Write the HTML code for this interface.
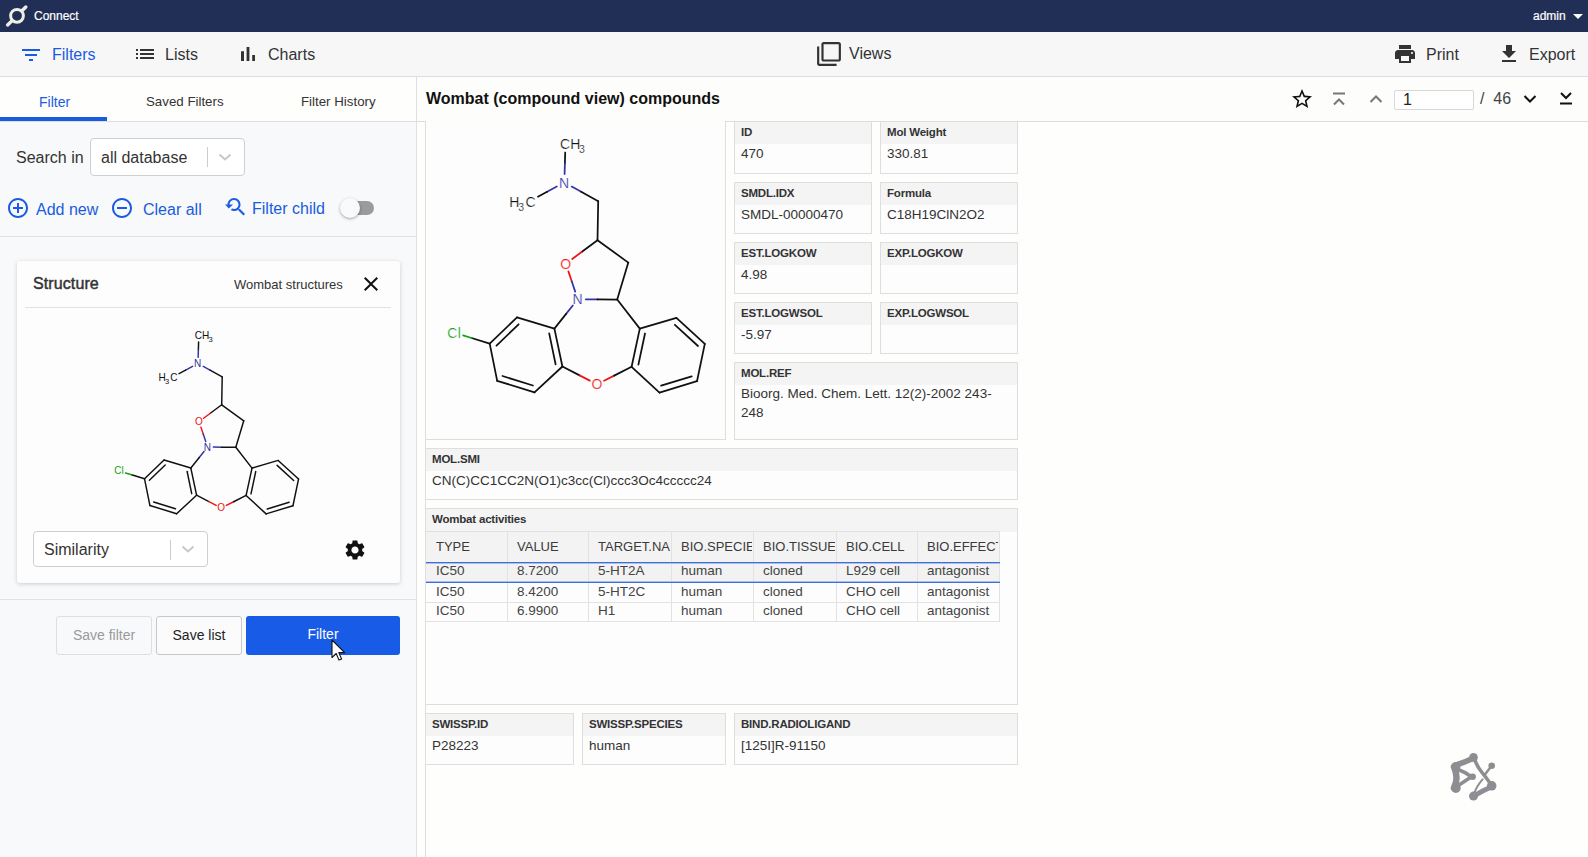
<!DOCTYPE html>
<html><head><meta charset="utf-8">
<style>
*{box-sizing:border-box;margin:0;padding:0}
html,body{width:1588px;height:857px;overflow:hidden;background:#fefefd;font-family:"Liberation Sans",sans-serif;color:#333}
.abs{position:absolute}
svg{display:block}
#hdr{left:0;top:0;width:1588px;height:32px;background:#212f56}
#tb{left:0;top:32px;width:1588px;height:45px;background:#f7f7f8;border-bottom:1px solid #dedede}
#lp{left:0;top:77px;width:417px;height:780px;background:#f8f9fa;border-right:1px solid #e0e0e2}
#tabs{left:0;top:0;width:416px;height:45px;background:#fefefd;border-bottom:1px solid #dfdfdf}
#main{left:417px;top:77px;width:1171px;height:780px;background:#fefefd}
.t{position:absolute;white-space:nowrap;line-height:1}
.box{position:absolute;border:1px solid #dedede;background:#fdfdfd}
.box .lh{position:absolute;left:0;top:0;right:0;height:22px;background:#f4f4f5}
.box .lb{position:absolute;left:6px;top:5px;font-size:11.5px;letter-spacing:-0.2px;font-weight:bold;color:#333;white-space:nowrap;line-height:1}
.box .vl{position:absolute;left:6px;top:25px;font-size:13.5px;color:#333;white-space:nowrap;line-height:1}
</style></head><body>
<!-- header -->
<div id="hdr" class="abs">
  <svg class="abs" style="left:0;top:0" width="32" height="32" viewBox="0 0 32 32">
    <circle cx="17" cy="15.8" r="6.4" fill="none" stroke="#f0ece6" stroke-width="3"/>
    <path d="M22 10.8L25.8 7" stroke="#f0ece6" stroke-width="3.4" stroke-linecap="round"/>
    <path d="M12 20.8L7.6 24.9" stroke="#f0ece6" stroke-width="3.4" stroke-linecap="round"/>
  </svg>
  <div class="t" style="left:34px;top:10px;font-size:12px;color:#fff;-webkit-text-stroke:0.2px #fff">Connect</div>
  <div class="t" style="left:1533px;top:10px;font-size:12px;color:#fff;-webkit-text-stroke:0.2px #fff">admin</div>
  <svg class="abs" style="left:1573px;top:14px" width="10" height="5" viewBox="0 0 10 5"><path d="M0 0h10L5 5z" fill="#fff"/></svg>
</div>
<!-- toolbar -->
<div id="tb" class="abs">
  <svg class="abs" style="left:19px;top:11px" width="24" height="24" viewBox="0 0 24 24"><path fill="#1a5ce0" d="M10 18h4v-2h-4v2zM3 6v2h18V6H3zm3 7h12v-2H6v2z"/></svg>
  <div class="t" style="left:52px;top:15px;font-size:16px;color:#1a5ce0">Filters</div>
  <svg class="abs" style="left:133px;top:10px" width="24" height="24" viewBox="0 0 24 24"><path fill="#333" d="M3 13h2v-2H3v2zm0 4h2v-2H3v2zm0-8h2V7H3v2zm4 4h14v-2H7v2zm0 4h14v-2H7v2zM7 7v2h14V7H7z"/></svg>
  <div class="t" style="left:165px;top:15px;font-size:16px;color:#333">Lists</div>
  <svg class="abs" style="left:236px;top:10px" width="24" height="24" viewBox="0 0 24 24"><path fill="#333" d="M5 9.2h3V19H5zM10.6 5h2.8v14h-2.8zm5.6 8H19v6h-2.8z"/></svg>
  <div class="t" style="left:268px;top:15px;font-size:16px;color:#333">Charts</div>
  <svg class="abs" style="left:816px;top:9px" width="26" height="26" viewBox="0 0 24 24"><path fill="#333" d="M3 5H1v16c0 1.1.9 2 2 2h16v-2H3V5zm18-4H7c-1.1 0-2 .9-2 2v14c0 1.1.9 2 2 2h14c1.1 0 2-.9 2-2V3c0-1.1-.9-2-2-2zm0 16H7V3h14v14z"/></svg>
  <div class="t" style="left:849px;top:14px;font-size:16px;color:#333">Views</div>
  <svg class="abs" style="left:1393px;top:10px" width="24" height="24" viewBox="0 0 24 24"><path fill="#333" d="M19 8H5c-1.66 0-3 1.34-3 3v6h4v4h12v-4h4v-6c0-1.66-1.34-3-3-3zm-3 11H8v-5h8v5zm3-7c-.55 0-1-.45-1-1s.45-1 1-1 1 .45 1 1-.45 1-1 1zm-1-9H6v4h12V3z"/></svg>
  <div class="t" style="left:1426px;top:15px;font-size:16px;color:#333">Print</div>
  <svg class="abs" style="left:1497px;top:10px" width="24" height="24" viewBox="0 0 24 24"><path fill="#333" d="M19 9h-4V3H9v6H5l7 7 7-7zM5 18v2h14v-2H5z"/></svg>
  <div class="t" style="left:1529px;top:15px;font-size:16px;color:#333">Export</div>
</div>
<!-- left panel -->
<div id="lp" class="abs">
  <div id="tabs" class="abs">
    <div class="t" style="left:39px;top:18px;font-size:14px;color:#1a5ce0">Filter</div>
    <div class="abs" style="left:0;top:40px;width:107px;height:4px;background:#1a5ce0"></div>
    <div class="t" style="left:146px;top:18px;font-size:13.3px;color:#333">Saved Filters</div>
    <div class="t" style="left:301px;top:18px;font-size:13.3px;color:#333">Filter History</div>
  </div>
  <div class="t" style="left:16px;top:73px;font-size:16px;color:#333">Search in</div>
  <div class="abs" style="left:90px;top:61px;width:155px;height:38px;border:1px solid #cfcfcf;border-radius:4px;background:#fff">
    <div class="t" style="left:10px;top:11px;font-size:16px;color:#333">all database</div>
    <div class="abs" style="left:116px;top:8px;width:1px;height:20px;background:#ccc"></div>
    <svg class="abs" style="left:127px;top:13px" width="14" height="10" viewBox="0 0 14 10"><path d="M1.5 2.5L7 7.5l5.5-5" fill="none" stroke="#c8c8c8" stroke-width="2"/></svg>
  </div>
  <svg class="abs" style="left:6px;top:119px" width="24" height="24" viewBox="0 0 24 24"><path fill="#1a5ce0" d="M13 7h-2v4H7v2h4v4h2v-4h4v-2h-4V7zm-1-5C6.48 2 2 6.48 2 12s4.48 10 10 10 10-4.48 10-10S17.52 2 12 2zm0 18c-4.41 0-8-3.59-8-8s3.59-8 8-8 8 3.59 8 8-3.59 8-8 8z"/></svg>
  <div class="t" style="left:36px;top:125px;font-size:16px;color:#1a5ce0">Add new</div>
  <svg class="abs" style="left:110px;top:119px" width="24" height="24" viewBox="0 0 24 24"><path fill="#1a5ce0" d="M7 11v2h10v-2H7zm5-9C6.48 2 2 6.48 2 12s4.48 10 10 10 10-4.48 10-10S17.52 2 12 2zm0 18c-4.41 0-8-3.59-8-8s3.59-8 8-8 8 3.59 8 8-3.59 8-8 8z"/></svg>
  <div class="t" style="left:143px;top:125px;font-size:16px;color:#1a5ce0">Clear all</div>
  <svg class="abs" style="left:223px;top:118px" width="24" height="24" viewBox="0 0 24 24"><path fill="#1a5ce0" d="M17.01 14h-.8l-.27-.27c.98-1.14 1.57-2.61 1.57-4.23 0-3.59-2.91-6.5-6.5-6.5s-6.5 3-6.5 6.5H2l3.84 4 4.16-4H6.51C6.51 7 8.530 5 11.01 5s4.5 2.01 4.5 4.5c0 2.480-2.02 4.5-4.5 4.5-.65 0-1.26-.14-1.82-.38L7.71 15.1c.97.57 2.09.9 3.3.9 1.61 0 3.08-.59 4.22-1.57l.27.27v.79l5.01 4.99L22 19l-4.99-5z"/></svg>
  <div class="t" style="left:252px;top:124px;font-size:16px;color:#1a5ce0">Filter child</div>
  <div class="abs" style="left:341px;top:124px;width:33px;height:14px;border-radius:7px;background:#9b9b9b"></div>
  <div class="abs" style="left:340px;top:121px;width:20px;height:20px;border-radius:10px;background:#fafafa;box-shadow:0 1px 3px rgba(0,0,0,.35)"></div>
  <div class="abs" style="left:0;top:159px;width:416px;height:1px;background:#e2e2e3"></div>
  <!-- card -->
  <div class="abs" style="left:17px;top:184px;width:383px;height:322px;background:#fdfdfd;border-radius:3px;box-shadow:0 1px 4px rgba(0,0,0,.18)">
    <div class="t" style="left:16px;top:15px;font-size:16px;color:#333;-webkit-text-stroke:0.45px #333;letter-spacing:0.1px">Structure</div>
    <div class="t" style="left:217px;top:17px;font-size:13px;color:#333">Wombat structures</div>
    <svg class="abs" style="left:347px;top:16px" width="14" height="14" viewBox="5 5 14 14"><path fill="#111" d="M19 6.41L17.59 5 12 10.59 6.41 5 5 6.41 10.59 12 5 17.59 6.41 19 12 13.41 17.59 19 19 17.59 13.41 12z"/></svg>
    <div class="abs" style="left:8px;top:46px;width:366px;height:1px;background:#e2e2e2"></div>
    <div class="abs" style="left:16px;top:270px;width:175px;height:36px;border:1px solid #cfcfcf;border-radius:4px;background:#fff">
      <div class="t" style="left:10px;top:10px;font-size:16px;color:#333">Similarity</div>
      <div class="abs" style="left:136px;top:8px;width:1px;height:20px;background:#ccc"></div>
      <svg class="abs" style="left:147px;top:12px" width="14" height="10" viewBox="0 0 14 10"><path d="M1.5 2.5L7 7.5l5.5-5" fill="none" stroke="#c8c8c8" stroke-width="2"/></svg>
    </div>
    <svg class="abs" style="left:326px;top:355px" width="0" height="0"></svg>
    <svg class="abs" style="left:326px;top:277px" width="24" height="24" viewBox="0 0 24 24"><path fill="#111" d="M19.14 12.94c.04-.3.06-.61.06-.94 0-.32-.02-.64-.07-.94l2.030-1.58c.18-.14.23-.41.12-.61l-1.92-3.32c-.12-.22-.37-.29-.59-.22l-2.39.96c-.5-.38-1.03-.7-1.62-.94l-.36-2.54c-.04-.24-.24-.41-.48-.41h-3.84c-.24 0-.43.17-.47.41l-.36 2.54c-.59.24-1.13.57-1.62.94l-2.39-.96c-.22-.08-.47 0-.59.22L2.74 8.87c-.12.21-.08.47.12.61l2.03 1.58c-.05.3-.09.63-.09.94s.02.64.07.94l-2.03 1.58c-.18.14-.23.41-.12.61l1.92 3.32c.12.22.37.29.59.22l2.39-.96c.5.38 1.03.7 1.62.94l.36 2.54c.05.24.24.41.48.41h3.84c.24 0 .44-.17.47-.41l.36-2.54c.59-.24 1.13-.56 1.62-.94l2.39.96c.22.08.47 0 .59-.22l1.92-3.32c.12-.22.07-.47-.12-.61l-2.01-1.58zM12 15.6c-1.98 0-3.6-1.62-3.6-3.6s1.62-3.6 3.6-3.6 3.6 1.62 3.6 3.6-1.62 3.6-3.6 3.6z"/></svg>
  </div>
  <div class="abs" style="left:0;top:522px;width:416px;height:1px;background:#e2e2e3"></div>
  <div class="abs" style="left:56px;top:539px;width:96px;height:39px;border:1px solid #dedfe0;border-radius:3px;background:#f8f9fa"><div class="t" style="left:0;width:94px;text-align:center;top:11px;font-size:14px;color:#9a9a9a">Save filter</div></div>
  <div class="abs" style="left:156px;top:539px;width:86px;height:39px;border:1px solid #c8c8c8;border-radius:3px;background:#fbfbfb"><div class="t" style="left:0;width:84px;text-align:center;top:11px;font-size:14px;color:#222">Save list</div></div>
  <div class="abs" style="left:246px;top:539px;width:154px;height:39px;border-radius:3px;background:#185be7"><div class="t" style="left:0;width:154px;text-align:center;top:11px;font-size:14px;color:#fff">Filter</div></div>
</div>
<!-- main -->
<div id="main" class="abs">
<div class="abs" style="left:0;top:0;width:1171px;height:45px;border-bottom:1px solid #dcdcdc;background:#fdfdfc"></div>
<div class="t" style="left:9px;top:14px;font-size:16px;font-weight:bold;color:#111">Wombat (compound view) compounds</div>
<svg class="abs" style="left:873px;top:10px" width="24" height="24" viewBox="0 0 24 24"><path fill="#111" d="M22 9.24l-7.19-.62L12 2 9.19 8.63 2 9.24l5.46 4.73L5.82 21 12 17.27 18.18 21l-1.63-7.03L22 9.24zM12 15.4l-3.76 2.27 1-4.28-3.32-2.88 4.38-.38L12 6.1l1.71 4.04 4.38.38-3.32 2.88 1 4.28L12 15.4z"/></svg>
<svg class="abs" style="left:914px;top:15px" width="16" height="16" viewBox="0 0 16 16"><path d="M2 1.5h12" stroke="#777" stroke-width="2"/><path d="M3 12.5l5-5 5 5" fill="none" stroke="#777" stroke-width="2"/></svg>
<svg class="abs" style="left:952px;top:15px" width="14" height="14" viewBox="0 0 14 14"><path d="M1.5 10l5.5-5.5 5.5 5.5" fill="none" stroke="#777" stroke-width="2"/></svg>
<div class="abs" style="left:977px;top:13px;width:80px;height:20px;border:1px solid #d8d8d8;border-radius:2px;background:#fff"><div class="t" style="left:8px;top:1px;font-size:16px;color:#222">1</div></div>
<div class="t" style="left:1063px;top:14px;font-size:16px;color:#444">/&nbsp;&nbsp;46</div>
<svg class="abs" style="left:1106px;top:15px" width="14" height="14" viewBox="0 0 14 14"><path d="M1.5 4l5.5 5.5 5.5-5.5" fill="none" stroke="#111" stroke-width="2"/></svg>
<svg class="abs" style="left:1141px;top:14px" width="16" height="16" viewBox="0 0 16 16"><path d="M3 2l5 5 5-5" fill="none" stroke="#111" stroke-width="2"/><path d="M2 12.5h12" stroke="#111" stroke-width="2"/></svg>
<div class="abs" style="left:8px;top:45px;width:1px;height:735px;background:#dedede"></div>
<div class="box" style="left:8px;top:44px;width:301px;height:319px;border-top:none"></div>
<div class="box" style="left:317px;top:44px;width:138px;height:53px"><div class="lh"></div><div class="lb">ID</div><div class="vl">470</div></div>
<div class="box" style="left:463px;top:44px;width:138px;height:53px"><div class="lh"></div><div class="lb">Mol Weight</div><div class="vl">330.81</div></div>
<div class="box" style="left:317px;top:105px;width:138px;height:52px"><div class="lh"></div><div class="lb">SMDL.IDX</div><div class="vl">SMDL-00000470</div></div>
<div class="box" style="left:463px;top:105px;width:138px;height:52px"><div class="lh"></div><div class="lb">Formula</div><div class="vl">C18H19ClN2O2</div></div>
<div class="box" style="left:317px;top:165px;width:138px;height:52px"><div class="lh"></div><div class="lb">EST.LOGKOW</div><div class="vl">4.98</div></div>
<div class="box" style="left:463px;top:165px;width:138px;height:52px"><div class="lh"></div><div class="lb">EXP.LOGKOW</div><div class="vl"></div></div>
<div class="box" style="left:317px;top:225px;width:138px;height:52px"><div class="lh"></div><div class="lb">EST.LOGWSOL</div><div class="vl">-5.97</div></div>
<div class="box" style="left:463px;top:225px;width:138px;height:52px"><div class="lh"></div><div class="lb">EXP.LOGWSOL</div><div class="vl"></div></div>
<div class="box" style="left:317px;top:285px;width:284px;height:78px"><div class="lh"></div><div class="lb">MOL.REF</div><div class="vl" style="line-height:19px;top:21px">Bioorg. Med. Chem. Lett. 12(2)-2002 243-<br>248</div></div>
<div class="box" style="left:8px;top:371px;width:593px;height:52px"><div class="lh"></div><div class="lb">MOL.SMI</div><div class="vl">CN(C)CC1CC2N(O1)c3cc(Cl)ccc3Oc4ccccc24</div></div>
<div class="box" style="left:8px;top:636px;width:149px;height:52px"><div class="lh"></div><div class="lb">SWISSP.ID</div><div class="vl">P28223</div></div>
<div class="box" style="left:165px;top:636px;width:144px;height:52px"><div class="lh"></div><div class="lb">SWISSP.SPECIES</div><div class="vl">human</div></div>
<div class="box" style="left:317px;top:636px;width:284px;height:52px"><div class="lh"></div><div class="lb">BIND.RADIOLIGAND</div><div class="vl">[125I]R-91150</div></div>
<div class="box" style="left:8px;top:431px;width:593px;height:197px"><div class="lh" style="height:23px"></div><div class="lb">Wombat activities</div></div>
<div class="abs" style="left:9px;top:454px;width:573px;height:31px;background:#f3f3f3;border-top:1px solid #e0e0e0"></div>
<div class="abs" style="left:9px;top:485px;width:573px;height:20px;background:#f2f2f2"></div>
<div class="abs" style="left:9px;top:525px;width:574px;height:1px;background:#e2e2e2"></div>
<div class="abs" style="left:9px;top:544px;width:574px;height:1px;background:#e2e2e2"></div>
<div class="abs" style="left:90px;top:454px;width:1px;height:90px;background:#e2e2e2"></div>
<div class="abs" style="left:171px;top:454px;width:1px;height:90px;background:#e2e2e2"></div>
<div class="abs" style="left:254px;top:454px;width:1px;height:90px;background:#e2e2e2"></div>
<div class="abs" style="left:336px;top:454px;width:1px;height:90px;background:#e2e2e2"></div>
<div class="abs" style="left:419px;top:454px;width:1px;height:90px;background:#e2e2e2"></div>
<div class="abs" style="left:500px;top:454px;width:1px;height:90px;background:#e2e2e2"></div>
<div class="abs" style="left:582px;top:454px;width:1px;height:90px;background:#e2e2e2"></div>
<div class="abs" style="left:9px;top:485px;width:574px;height:2px;background:linear-gradient(#3c6fd6 50%,#a9c0ee 50%)"></div>
<div class="abs" style="left:9px;top:504px;width:574px;height:2px;background:linear-gradient(#a9c0ee 50%,#3c6fd6 50%)"></div>
<div class="t" style="left:19px;top:463px;width:70px;overflow:hidden;padding-bottom:3px;font-size:13px;color:#3a3a3a">TYPE</div>
<div class="t" style="left:100px;top:463px;width:70px;overflow:hidden;padding-bottom:3px;font-size:13px;color:#3a3a3a">VALUE</div>
<div class="t" style="left:181px;top:463px;width:72px;overflow:hidden;padding-bottom:3px;font-size:13px;color:#3a3a3a">TARGET.NAME</div>
<div class="t" style="left:264px;top:463px;width:71px;overflow:hidden;padding-bottom:3px;font-size:13px;color:#3a3a3a">BIO.SPECIES</div>
<div class="t" style="left:346px;top:463px;width:72px;overflow:hidden;padding-bottom:3px;font-size:13px;color:#3a3a3a">BIO.TISSUES</div>
<div class="t" style="left:429px;top:463px;width:70px;overflow:hidden;padding-bottom:3px;font-size:13px;color:#3a3a3a">BIO.CELL</div>
<div class="t" style="left:510px;top:463px;width:71px;overflow:hidden;padding-bottom:3px;font-size:13px;color:#3a3a3a">BIO.EFFECT</div>
<div class="t" style="left:19px;top:487px;width:70px;overflow:hidden;padding-bottom:3px;font-size:13.5px;color:#444">IC50</div>
<div class="t" style="left:100px;top:487px;width:70px;overflow:hidden;padding-bottom:3px;font-size:13.5px;color:#444">8.7200</div>
<div class="t" style="left:181px;top:487px;width:72px;overflow:hidden;padding-bottom:3px;font-size:13.5px;color:#444">5-HT2A</div>
<div class="t" style="left:264px;top:487px;width:71px;overflow:hidden;padding-bottom:3px;font-size:13.5px;color:#444">human</div>
<div class="t" style="left:346px;top:487px;width:72px;overflow:hidden;padding-bottom:3px;font-size:13.5px;color:#444">cloned</div>
<div class="t" style="left:429px;top:487px;width:70px;overflow:hidden;padding-bottom:3px;font-size:13.5px;color:#444">L929 cell</div>
<div class="t" style="left:510px;top:487px;width:71px;overflow:hidden;padding-bottom:3px;font-size:13.5px;color:#444">antagonist</div>
<div class="t" style="left:19px;top:508px;width:70px;overflow:hidden;padding-bottom:3px;font-size:13.5px;color:#444">IC50</div>
<div class="t" style="left:100px;top:508px;width:70px;overflow:hidden;padding-bottom:3px;font-size:13.5px;color:#444">8.4200</div>
<div class="t" style="left:181px;top:508px;width:72px;overflow:hidden;padding-bottom:3px;font-size:13.5px;color:#444">5-HT2C</div>
<div class="t" style="left:264px;top:508px;width:71px;overflow:hidden;padding-bottom:3px;font-size:13.5px;color:#444">human</div>
<div class="t" style="left:346px;top:508px;width:72px;overflow:hidden;padding-bottom:3px;font-size:13.5px;color:#444">cloned</div>
<div class="t" style="left:429px;top:508px;width:70px;overflow:hidden;padding-bottom:3px;font-size:13.5px;color:#444">CHO cell</div>
<div class="t" style="left:510px;top:508px;width:71px;overflow:hidden;padding-bottom:3px;font-size:13.5px;color:#444">antagonist</div>
<div class="t" style="left:19px;top:527px;width:70px;overflow:hidden;padding-bottom:3px;font-size:13.5px;color:#444">IC50</div>
<div class="t" style="left:100px;top:527px;width:70px;overflow:hidden;padding-bottom:3px;font-size:13.5px;color:#444">6.9900</div>
<div class="t" style="left:181px;top:527px;width:72px;overflow:hidden;padding-bottom:3px;font-size:13.5px;color:#444">H1</div>
<div class="t" style="left:264px;top:527px;width:71px;overflow:hidden;padding-bottom:3px;font-size:13.5px;color:#444">human</div>
<div class="t" style="left:346px;top:527px;width:72px;overflow:hidden;padding-bottom:3px;font-size:13.5px;color:#444">cloned</div>
<div class="t" style="left:429px;top:527px;width:70px;overflow:hidden;padding-bottom:3px;font-size:13.5px;color:#444">CHO cell</div>
<div class="t" style="left:510px;top:527px;width:71px;overflow:hidden;padding-bottom:3px;font-size:13.5px;color:#444">antagonist</div>

<!--MOL-->
<!--LOGO-->
</div>
<svg class="abs" style="left:0;top:0;pointer-events:none" width="1588" height="857" viewBox="0 0 1588 857">
<g id="mol"><g stroke-width="1.75" stroke-linecap="round" fill="none">
<path d="M565.2 152.5L564.9 163.5" stroke="#111"/>
<path d="M564.9 163.5L564.6 174.0" stroke="#3434a4"/>
<path d="M556.8 186.5L547.1 191.8" stroke="#3434a4"/>
<path d="M547.1 191.8L537.9 196.7" stroke="#111"/>
<path d="M571.7 186.6L581.2 191.8" stroke="#3434a4"/>
<path d="M581.2 191.8L598.2 201.2" stroke="#111"/>
<path d="M598.2 201.2L597.5 240.2" stroke="#111"/>
<path d="M597.5 240.2L581.6 252.0" stroke="#111"/>
<path d="M581.6 252.0L572.2 259.0" stroke="#ee1414"/>
<path d="M597.5 240.2L628.3 262.6" stroke="#111"/>
<path d="M628.3 262.6L617.2 299.5" stroke="#111"/>
<path d="M568.4 271.4L571.8 281.5" stroke="#ee1414"/>
<path d="M571.8 281.5L575.2 291.6" stroke="#3434a4"/>
<path d="M585.8 299.3L597.5 299.4" stroke="#3434a4"/>
<path d="M597.5 299.4L617.2 299.5" stroke="#111"/>
<path d="M572.8 305.5L566.1 313.9" stroke="#3434a4"/>
<path d="M566.1 313.9L554.4 328.6" stroke="#111"/>
<path d="M617.2 299.5L639.8 328.6" stroke="#111"/>
<path d="M554.4 328.6L517.0 317.4" stroke="#111"/>
<path d="M517.0 317.4L489.7 343.6" stroke="#111"/>
<path d="M489.7 343.6L497.2 380.8" stroke="#111"/>
<path d="M497.2 380.8L534.5 392.4" stroke="#111"/>
<path d="M534.5 392.4L562.4 366.5" stroke="#111"/>
<path d="M562.4 366.5L554.4 328.6" stroke="#111"/>
<path d="M639.8 328.6L676.4 317.9" stroke="#111"/>
<path d="M676.4 317.9L704.8 343.9" stroke="#111"/>
<path d="M704.8 343.9L697.0 381.2" stroke="#111"/>
<path d="M697.0 381.2L659.5 392.6" stroke="#111"/>
<path d="M659.5 392.6L631.6 366.8" stroke="#111"/>
<path d="M631.6 366.8L639.8 328.6" stroke="#111"/>
<path d="M562.4 366.5L579.6 375.4" stroke="#111"/>
<path d="M579.6 375.4L589.8 380.6" stroke="#ee1414"/>
<path d="M604.0 380.7L614.2 375.6" stroke="#ee1414"/>
<path d="M614.2 375.6L631.6 366.8" stroke="#111"/>
<path d="M489.7 343.6L471.6 338.0" stroke="#111"/>
<path d="M471.6 338.0L463.1 335.4" stroke="#18a018"/>
<path d="M518.6 324.3L496.5 345.7" stroke="#111"/>
<path d="M555.6 364.3L549.2 333.4" stroke="#111"/>
<path d="M502.5 376.0L532.9 385.5" stroke="#111"/>
<path d="M674.9 324.8L698.0 346.0" stroke="#111"/>
<path d="M638.4 364.6L645.0 333.5" stroke="#111"/>
<path d="M691.7 376.4L661.1 385.7" stroke="#111"/>
</g><g font-family="Liberation Sans" text-anchor="middle" stroke="#fefefd" stroke-width="0.2">
<text x="565" y="148.8" fill="#111" font-size="14">C</text><text x="575.2" y="148.8" fill="#111" font-size="14">H</text><text x="582" y="153" fill="#111" font-size="10.5">3</text><text x="564" y="187.5" fill="#3434a4" font-size="14">N</text><text x="514.4" y="206.9" fill="#111" font-size="14">H</text><text x="521.1" y="210.9" fill="#111" font-size="10.5">3</text><text x="530.6" y="206.9" fill="#111" font-size="14">C</text><text x="565.8" y="268.9" fill="#ee1414" font-size="14">O</text><text x="577.6" y="304.2" fill="#3434a4" font-size="14">N</text><text x="452.4" y="337.5" fill="#18a018" font-size="14">C</text><text x="459.2" y="337.5" fill="#18a018" font-size="14">l</text><text x="596.9" y="389.1" fill="#ee1414" font-size="14">O</text>
</g></g>
<g transform="translate(-206.1,232.8) scale(0.716)"><g stroke-width="2.05" stroke-linecap="round" fill="none">
<path d="M565.2 152.5L564.9 163.5" stroke="#111"/>
<path d="M564.9 163.5L564.6 174.0" stroke="#3434a4"/>
<path d="M556.8 186.5L547.1 191.8" stroke="#3434a4"/>
<path d="M547.1 191.8L537.9 196.7" stroke="#111"/>
<path d="M571.7 186.6L581.2 191.8" stroke="#3434a4"/>
<path d="M581.2 191.8L598.2 201.2" stroke="#111"/>
<path d="M598.2 201.2L597.5 240.2" stroke="#111"/>
<path d="M597.5 240.2L581.6 252.0" stroke="#111"/>
<path d="M581.6 252.0L572.2 259.0" stroke="#ee1414"/>
<path d="M597.5 240.2L628.3 262.6" stroke="#111"/>
<path d="M628.3 262.6L617.2 299.5" stroke="#111"/>
<path d="M568.4 271.4L571.8 281.5" stroke="#ee1414"/>
<path d="M571.8 281.5L575.2 291.6" stroke="#3434a4"/>
<path d="M585.8 299.3L597.5 299.4" stroke="#3434a4"/>
<path d="M597.5 299.4L617.2 299.5" stroke="#111"/>
<path d="M572.8 305.5L566.1 313.9" stroke="#3434a4"/>
<path d="M566.1 313.9L554.4 328.6" stroke="#111"/>
<path d="M617.2 299.5L639.8 328.6" stroke="#111"/>
<path d="M554.4 328.6L517.0 317.4" stroke="#111"/>
<path d="M517.0 317.4L489.7 343.6" stroke="#111"/>
<path d="M489.7 343.6L497.2 380.8" stroke="#111"/>
<path d="M497.2 380.8L534.5 392.4" stroke="#111"/>
<path d="M534.5 392.4L562.4 366.5" stroke="#111"/>
<path d="M562.4 366.5L554.4 328.6" stroke="#111"/>
<path d="M639.8 328.6L676.4 317.9" stroke="#111"/>
<path d="M676.4 317.9L704.8 343.9" stroke="#111"/>
<path d="M704.8 343.9L697.0 381.2" stroke="#111"/>
<path d="M697.0 381.2L659.5 392.6" stroke="#111"/>
<path d="M659.5 392.6L631.6 366.8" stroke="#111"/>
<path d="M631.6 366.8L639.8 328.6" stroke="#111"/>
<path d="M562.4 366.5L579.6 375.4" stroke="#111"/>
<path d="M579.6 375.4L589.8 380.6" stroke="#ee1414"/>
<path d="M604.0 380.7L614.2 375.6" stroke="#ee1414"/>
<path d="M614.2 375.6L631.6 366.8" stroke="#111"/>
<path d="M489.7 343.6L471.6 338.0" stroke="#111"/>
<path d="M471.6 338.0L463.1 335.4" stroke="#18a018"/>
<path d="M518.6 324.3L496.5 345.7" stroke="#111"/>
<path d="M555.6 364.3L549.2 333.4" stroke="#111"/>
<path d="M502.5 376.0L532.9 385.5" stroke="#111"/>
<path d="M674.9 324.8L698.0 346.0" stroke="#111"/>
<path d="M638.4 364.6L645.0 333.5" stroke="#111"/>
<path d="M691.7 376.4L661.1 385.7" stroke="#111"/>
</g><g font-family="Liberation Sans" text-anchor="middle" stroke="none">
<text x="565" y="148.8" fill="#111" font-size="14">C</text><text x="575.2" y="148.8" fill="#111" font-size="14">H</text><text x="582" y="153" fill="#111" font-size="10.5">3</text><text x="564" y="187.5" fill="#3434a4" font-size="14">N</text><text x="514.4" y="206.9" fill="#111" font-size="14">H</text><text x="521.1" y="210.9" fill="#111" font-size="10.5">3</text><text x="530.6" y="206.9" fill="#111" font-size="14">C</text><text x="565.8" y="268.9" fill="#ee1414" font-size="14">O</text><text x="577.6" y="304.2" fill="#3434a4" font-size="14">N</text><text x="452.4" y="337.5" fill="#18a018" font-size="14">C</text><text x="459.2" y="337.5" fill="#18a018" font-size="14">l</text><text x="596.9" y="389.1" fill="#ee1414" font-size="14">O</text>
</g></g>
<g fill="#8d8d92" stroke="#8d8d92" stroke-linecap="round" stroke-linejoin="round">
<circle cx="1473.5" cy="757.4" r="4.3" stroke="none"/>
<circle cx="1455.9" cy="766.6" r="4.6" stroke="none"/>
<circle cx="1455.9" cy="788.2" r="4.8" stroke="none"/>
<circle cx="1472.6" cy="776.7" r="3.3" stroke="none"/>
<circle cx="1491.7" cy="765.8" r="3.3" stroke="none"/>
<circle cx="1491.7" cy="785.8" r="4.8" stroke="none"/>
<circle cx="1473.5" cy="796.1" r="4.5" stroke="none"/>
<path d="M1454 767Q1459 778 1454 788" fill="none" stroke-width="6.5"/>
<path d="M1457 769Q1465 772 1471.5 776.7Q1465 781 1457.5 786" fill="none" stroke-width="3.6"/>
<path d="M1456 765Q1466 762 1473.5 758" fill="none" stroke-width="5.5"/>
<path d="M1474.5 758.5Q1476 765 1482 772.5Q1489 781 1491.7 786" fill="none" stroke-width="3.6"/>
<path d="M1491.7 765.8L1484.5 775" fill="none" stroke-width="2.4"/>
<path d="M1491 787Q1482 791 1473.5 796.1" fill="none" stroke-width="5"/>
<path d="M1473.5 795Q1476.5 786 1482.6 779.3" fill="none" stroke-width="2"/>
</g>
<path d="M332 640v17.5l4.2-4 2.8 6.6 2.6-1.1-2.8-6.4h5.8z" fill="#fff" stroke="#111" stroke-width="1.1" stroke-linejoin="round"/>
</svg>
</body></html>
